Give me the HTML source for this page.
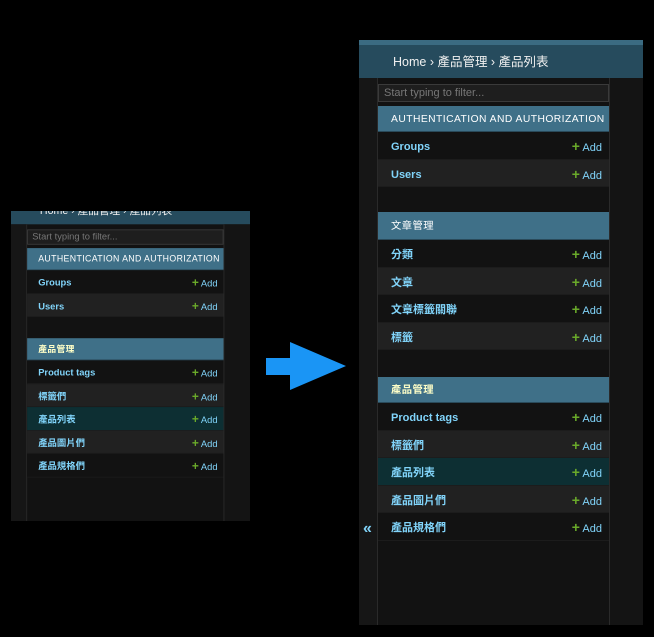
<!DOCTYPE html>
<html><head><meta charset="utf-8"><style>
*{margin:0;padding:0;box-sizing:border-box}
html,body{width:654px;height:637px;overflow:hidden}
body{background:#000;position:relative;font-family:"Liberation Sans","Noto Sans CJK TC",sans-serif}
.panel{position:absolute;width:284px;height:585px;background:#121212;overflow:hidden}
.strip{position:absolute;left:0;top:0;width:284px;height:5px;background:#3b6b82}
.hdr{position:absolute;left:0;top:5px;width:284px;height:33px;background:#264b5d;color:#f0f0f0;font-size:12.5px;line-height:35px;padding-left:34px;white-space:nowrap}
.gut{position:absolute;left:0;top:38px;width:19px;height:547px;background:#161616;border-right:1px solid #2a2a2a}
.rt{position:absolute;left:250px;top:38px;width:34px;height:547px;background:#141414;border-left:1px solid #2a2a2a}
.nav{position:absolute;left:19px;top:38px;width:231px}
.filter{position:absolute;left:0;top:6px;width:231px;height:18px;border:1px solid #3a3a3a;background:#1e1e1e;color:#777;font-size:11px;line-height:16px;padding:0 5px;white-space:nowrap}
.cap{position:absolute;left:0;width:231px;height:26px;background:#3f7088;color:#fff;font-size:10.3px;letter-spacing:.45px;line-height:27px;padding:0 13px;border-bottom:1px solid #2a4a5a;white-space:nowrap}
.cap.cur{color:#ffffc8;font-weight:bold}
.row{position:absolute;left:0;width:231px;height:27.6px;font-size:11px;color:#81d4fa;line-height:30px;padding:0 13px;border-bottom:1px solid #1c1c1c;font-weight:bold;white-space:nowrap}
.row.a{background:#121212}.row.b{background:#212121}.row.sel{background:#0d2f33}
.add{position:absolute;right:7px;top:-1px;font-weight:normal;color:#81d4fa}
.add b{color:#6aaa2a;font-size:14px}
.arrow{position:absolute;left:266px;top:342px}
</style></head><body>

<div style="position:absolute;left:11px;top:211px;width:239px;height:310px;overflow:hidden;background:#121212">
 <div class="panel" style="left:0;top:-19px;transform:scale(0.85);transform-origin:0 0;height:400px">
  <div class="strip"></div>
  <div class="hdr">Home › 產品管理 › 產品列表</div>
  <div class="gut"></div><div class="rt" style="height:400px"></div>
  <div class="nav">
   <div class="filter">Start typing to filter...</div>
   <div class="cap" style="top:28px">AUTHENTICATION AND AUTHORIZATION</div>
   <div class="row a" style="top:54px">Groups<span class="add"><b>+</b> Add</span></div>
   <div class="row b" style="top:81.6px">Users<span class="add"><b>+</b> Add</span></div>
   <div class="cap cur" style="top:134px">產品管理</div>
   <div class="row a" style="top:160px">Product tags<span class="add"><b>+</b> Add</span></div>
   <div class="row b" style="top:187.6px">標籤們<span class="add"><b>+</b> Add</span></div>
   <div class="row sel" style="top:215.2px">產品列表<span class="add"><b>+</b> Add</span></div>
   <div class="row b" style="top:242.8px">產品圖片們<span class="add"><b>+</b> Add</span></div>
   <div class="row a" style="top:270.4px">產品規格們<span class="add"><b>+</b> Add</span></div>
  </div>
 </div>
</div>

<svg class="arrow" width="82" height="50"><path d="M0 16H24V0L80 24L24 48V33H0Z" fill="#1a95f5"/></svg>

<div class="panel" style="left:359px;top:40px">
 <div class="strip"></div>
 <div class="hdr">Home › 產品管理 › 產品列表</div>
 <div class="gut"><span style="position:absolute;left:4px;top:442px;color:#81d4fa;font-size:16px;font-weight:bold">«</span></div>
 <div class="rt"></div>
 <div class="nav">
  <div class="filter">Start typing to filter...</div>
  <div class="cap" style="top:28px">AUTHENTICATION AND AUTHORIZATION</div>
  <div class="row a" style="top:54px">Groups<span class="add"><b>+</b> Add</span></div>
  <div class="row b" style="top:81.6px">Users<span class="add"><b>+</b> Add</span></div>
  <div class="cap" style="top:134px;height:28px;line-height:29px">文章管理</div>
  <div class="row a" style="top:162px">分類<span class="add"><b>+</b> Add</span></div>
  <div class="row b" style="top:189.6px">文章<span class="add"><b>+</b> Add</span></div>
  <div class="row a" style="top:217.2px">文章標籤關聯<span class="add"><b>+</b> Add</span></div>
  <div class="row b" style="top:244.8px">標籤<span class="add"><b>+</b> Add</span></div>
  <div class="cap cur" style="top:299px">產品管理</div>
  <div class="row a" style="top:325px">Product tags<span class="add"><b>+</b> Add</span></div>
  <div class="row b" style="top:352.6px">標籤們<span class="add"><b>+</b> Add</span></div>
  <div class="row sel" style="top:380.2px">產品列表<span class="add"><b>+</b> Add</span></div>
  <div class="row b" style="top:407.8px">產品圖片們<span class="add"><b>+</b> Add</span></div>
  <div class="row a" style="top:435.4px">產品規格們<span class="add"><b>+</b> Add</span></div>
 </div>
</div>
</body></html>
